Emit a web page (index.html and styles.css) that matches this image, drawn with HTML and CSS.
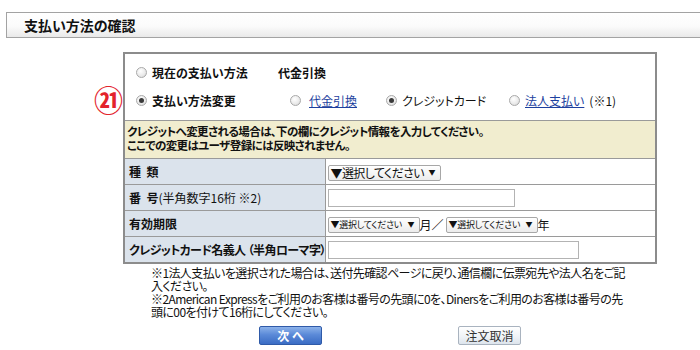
FILE: index.html
```html
<!DOCTYPE html>
<html lang="ja">
<head>
<meta charset="utf-8">
<title>支払い方法の確認</title>
<link rel="stylesheet" href="styles.css">
</head>
<body>
<div class="page">
  <div class="titlebar"><h1>支払い方法の確認</h1></div>

  <div class="panel">
    <div class="choices">
      <div class="choice-row">
        <label class="opt opt-current"><span class="radio"></span><b>現在の支払い方法</b></label>
        <b class="current">代金引換</b>
      </div>
      <div class="choice-row">
        <span class="badge">㉑</span>
        <label class="opt opt-change"><span class="radio checked"></span><b>支払い方法変更</b></label>
        <label class="opt opt-cod"><span class="radio"></span><a class="link" href="#">代金引換</a></label>
        <label class="opt opt-card"><span class="radio checked"></span>クレジットカード</label>
        <label class="opt"><span class="radio"></span><a class="link" href="#">法人支払い</a>(※1)</label>
      </div>
    </div>

    <div class="notice">
      <p>クレジットへ変更される場合は、下の欄にクレジット情報を入力してください。</p>
      <p>ここでの変更はユーザ登録には反映されません。</p>
    </div>

    <table class="form">
      <colgroup>
        <col class="col-label">
        <col>
      </colgroup>
      <tr>
        <th>種&nbsp;&nbsp;類</th>
        <td><span class="select select-lg"><span>▼選択してください</span><span class="arr">▼</span></span></td>
      </tr>
      <tr>
        <th>番&nbsp;&nbsp;号<span class="sub">(半角数字16桁 ※2)</span></th>
        <td><input class="field field-num" type="text"></td>
      </tr>
      <tr>
        <th>有効期限</th>
        <td class="expiry">
          <span class="select select-sm"><span>▼選択してください</span><span class="arr">▼</span></span><span class="unit unit-month">月／</span><span class="select select-sm"><span>▼選択してください</span><span class="arr">▼</span></span><span class="unit">年</span>
        </td>
      </tr>
      <tr>
        <th class="tight">クレジットカード名義人 （半角ローマ字）</th>
        <td><input class="field field-name" type="text"></td>
      </tr>
    </table>
  </div>

  <div class="notes">
    <span>※1法人支払いを選択された場合は、送付先確認ページに戻り、通信欄に伝票宛先や法人名をご記</span>
    <span>入ください。</span>
    <span>※2American Expressをご利用のお客様は番号の先頭に0を、Dinersをご利用のお客様は番号の先</span>
    <span>頭に00を付けて16桁にしてください。</span>
  </div>

  <div class="actions">
    <button class="btn btn-next" type="button">次 へ</button>
    <button class="btn btn-cancel" type="button">注文取消</button>
  </div>
</div>
</body>
</html>
```

FILE: styles.css
```css
html, body {
  margin: 0;
  padding: 0;
  overflow: hidden;
  background: #fff;
}

body {
  width: 700px;
  height: 350px;
  font-family: "Noto Sans CJK JP", "Noto Sans", sans-serif;
  font-size: 12px;
  color: #111;
  font-feature-settings: "palt";
}

.page {
  padding-top: 12px;
}

.titlebar {
  margin-left: 6px;
  margin-right: -20px;
  height: 24px;
  border: 1px solid #a3a3a3;
  background: linear-gradient(#ffffff 0%, #fbfbfb 55%, #e9e9e9 100%);
  display: flex;
  align-items: center;
  padding-left: 17px;
}

.titlebar h1 {
  margin: 0;
  font-size: 14px;
  font-weight: bold;
  color: #111;
  line-height: 1;
}

.panel {
  margin: 14px 0 0 123px;
  width: 530px;
  border: 2px solid #8c8c8c;
}

.choices {
  padding: 4px 0 6px 11px;
}

.choice-row {
  position: relative;
  display: flex;
  align-items: center;
  height: 28px;
}

.opt {
  display: flex;
  align-items: center;
  gap: 5px;
  white-space: nowrap;
}

.opt-current { width: 142px; }
.opt-change  { width: 154px; }
.opt-cod     { width: 96px; gap: 8px; }
.opt-card    { width: 123px; }

.current {
  font-weight: bold;
}

.badge {
  position: absolute;
  left: -42px;
  top: 50%;
  transform: translateY(-52%);
  font-size: 29px;
  line-height: 1;
  font-weight: bold;
  color: #e3232c;
  font-feature-settings: normal;
}

.radio {
  flex: none;
  position: relative;
  width: 11px;
  height: 11px;
  box-sizing: border-box;
  border-radius: 50%;
  border: 1px solid #a9a9a9;
  background: radial-gradient(circle at 40% 35%, #ffffff 0%, #e9e9e9 60%, #cfcfcf 100%);
}

.radio.checked::after {
  content: "";
  position: absolute;
  left: 2px;
  top: 2px;
  width: 5px;
  height: 5px;
  border-radius: 50%;
  background: #3a3a3a;
}

.link {
  color: #1d3f9e;
  text-decoration: underline;
}

.notice {
  border-top: 1px solid #9a9a9a;
  background: #f1edcf;
  padding: 3px 4px 6px 2px;
  font-weight: bold;
  font-size: 11.5px;
  letter-spacing: -0.6px;
  line-height: 14px;
}

.notice p {
  margin: 0;
}

.form {
  width: 100%;
  table-layout: fixed;
  border-collapse: collapse;
}

.col-label {
  width: 200px;
}

.form th,
.form td {
  border-top: 1px solid #9a9a9a;
  height: 25px;
  padding: 0;
  vertical-align: middle;
}

.form th {
  padding-left: 4px;
  background: #dbe3ec;
  border-right: 1px solid #9a9a9a;
  text-align: left;
  font-weight: bold;
  white-space: nowrap;
  overflow: hidden;
}

.form th.tight {
  letter-spacing: -0.6px;
}

.form th .sub {
  font-weight: normal;
}

.form td {
  padding-left: 2px;
}

.select {
  display: inline-flex;
  align-items: center;
  justify-content: space-between;
  box-sizing: border-box;
  height: 16px;
  padding: 0 4px 0 2px;
  border: 1px solid #a7a7a7;
  border-radius: 2px;
  background: linear-gradient(#ffffff, #ececec);
  vertical-align: middle;
  line-height: 1;
  white-space: nowrap;
}

.select-lg {
  width: 113px;
  font-size: 12px;
  letter-spacing: -0.6px;
}

.select-sm {
  width: 92px;
  font-size: 9px;
  letter-spacing: -0.3px;
}

.select .arr {
  font-size: 7px;
  letter-spacing: 0;
}

.unit {
  font-size: 12px;
  vertical-align: middle;
}

.unit-month {
  margin-right: 2px;
}

.field {
  display: block;
  box-sizing: border-box;
  height: 18px;
  margin: 0;
  padding: 0;
  border: 1px solid #b3b3b3;
  background: #fff;
}

.field-num  { width: 187px; }
.field-name { width: 251px; }

.notes {
  margin: 2px 0 0 151px;
  line-height: 13px;
  letter-spacing: -0.6px;
}

.notes span {
  display: block;
  white-space: nowrap;
}

.actions {
  display: flex;
  gap: 136px;
  margin: 8px 0 0 259px;
}

.btn {
  width: 63px;
  height: 19px;
  padding: 0;
  border-radius: 2px;
  font-family: inherit;
  font-size: 12px;
  line-height: 1;
  font-feature-settings: "palt";
}

.btn-next {
  color: #fff;
  font-weight: bold;
  border: 1px solid #2f5aa8;
  background: linear-gradient(#8cb2ea 0%, #5b8ad8 45%, #3a6cc4 100%);
}

.btn-cancel {
  color: #333;
  border: 1px solid #a9b3bf;
  background: linear-gradient(#ffffff 0%, #eef2f6 60%, #dde4ec 100%);
}
```
